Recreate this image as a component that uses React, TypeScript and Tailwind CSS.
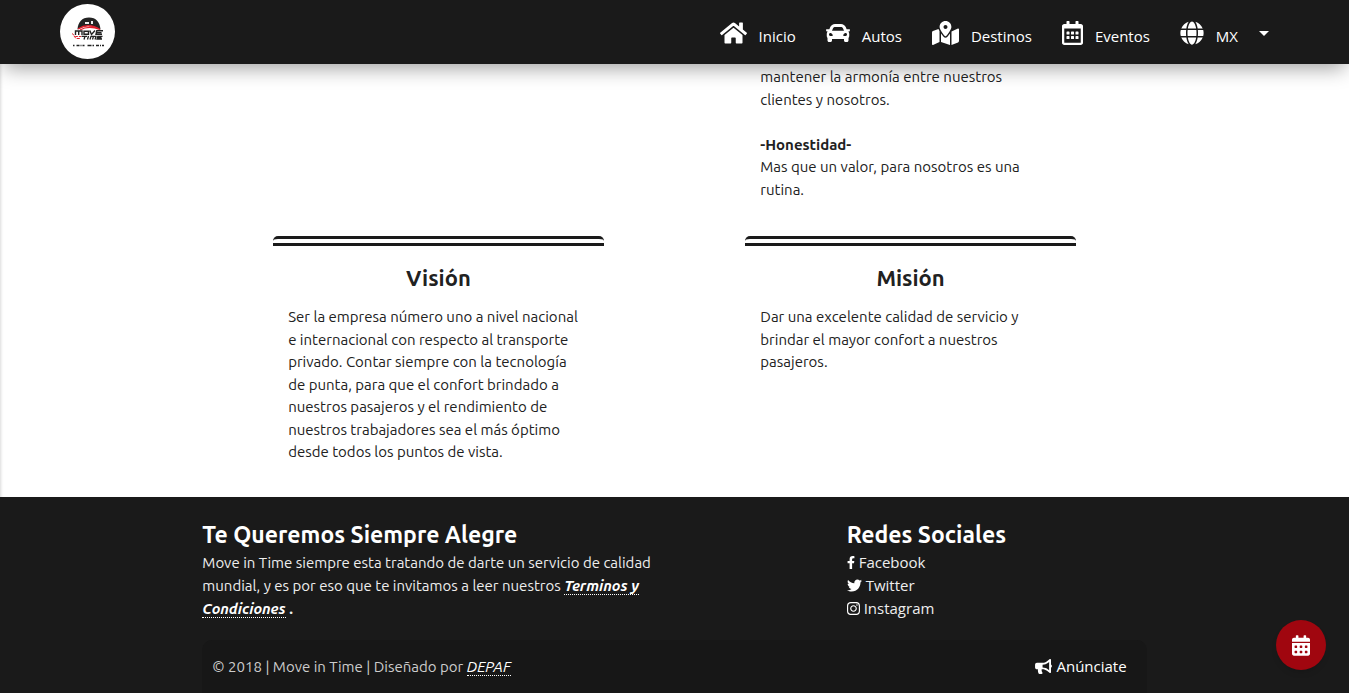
import type { ReactNode } from 'react';
import {
  FaBullhorn,
  FaCalendarAlt,
  FaCar,
  FaFacebookF,
  FaGlobe,
  FaHome,
  FaInstagram,
  FaMapMarkedAlt,
  FaRegCalendarAlt,
  FaTwitter,
} from 'react-icons/fa';

function Logo() {
  return (
    <svg viewBox="0 0 55 55" className="size-[55px]" role="img" aria-label="Move in Time">
      <circle cx="27.5" cy="27.5" r="27.5" fill="#fff" />
      <path d="M17.500 25.500C18 18 22 13.500 29 13.500C36 13.500 40 18 40.500 25.500L36 23.500C31 21 27 21 22 23.500Z" fill="#232323" />
      <path d="M25 18h4v2h-4zM31 17h2v3h-2z" fill="#eee" />
      <path d="M18 25C25 20.500 32 20.500 40 25.500C32 22.500 26 22.500 20 26" fill="none" stroke="#e01f2c" strokeWidth="1.300" />
      <path
        d="M15.500 31V27H22V31M18.700 27V31M24 27.200H28.500V30.300H24ZM29.800 26.500L31.500 30.500L35 26.500M43 26.800H36.800L36 30.300H42M36.500 28.600H41.500"
        fill="none"
        stroke="#222"
        strokeWidth="1.400"
      />
      <path
        d="M21.500 32.300H27M25 32.300L24 35.500M28.500 32L27.500 35.500M30 35.500L31 32.300H36L35 35.500M33.500 32.300L32.500 35.500M42.500 32.300H37.800L37 35H42M37.300 33.700H41.500"
        fill="none"
        stroke="#222"
        strokeWidth="1.300"
      />
      <path d="M12 29.500L15.500 32.500H21M14 32L16 34.500H20" fill="none" stroke="#e01f2c" strokeWidth="1" strokeDasharray="3 1" />
      <path d="M13 41.500H44" stroke="#222" strokeWidth="1.400" strokeDasharray="1.500 2 3 1 1 1 2 3 4 1" />
    </svg>
  );
}

function NavLink({ icon, children }: { icon: ReactNode; children: ReactNode }) {
  return (
    <li>
      <a href="#" className="flex items-center gap-3 px-[15px] text-[15px]">
        {icon}
        <span className="pt-[6px]">{children}</span>
      </a>
    </li>
  );
}

function Card({ title, children }: { title: string; children: ReactNode }) {
  return (
    <section className="mx-[15%] rounded-t-[5px] border-t-[10px] border-double border-[#1a1a1a] px-[15px]">
      <h2 className="pt-[18px] pb-[14px] text-center text-[22px] leading-7 font-semibold">{title}</h2>
      <p className="pr-[5px]">{children}</p>
    </section>
  );
}

function SocialLink({ icon, children }: { icon: ReactNode; children: ReactNode }) {
  return (
    <li>
      <a href="#" className="flex items-center gap-1 text-[#eee]">
        <span className="text-white">{icon}</span>
        {children}
      </a>
    </li>
  );
}

export default function App() {
  return (
    <div className="flex min-h-screen flex-col bg-white font-['Open_Sans','Noto_Sans',sans-serif] text-[15px] leading-normal text-[#212121]">
      <header className="sticky top-0 z-10 flex h-16 items-center justify-between bg-[#1a1a1a] pr-[73px] pl-[60px] text-white shadow-[0_8px_20px_-4px_rgba(0,0,0,0.38)]">
        <a href="#" className="pb-[2px]">
          <Logo />
        </a>
        <nav className="pt-[2px]">
          <ul className="flex items-center">
            <NavLink icon={<FaHome className="h-6 w-[27px]" />}>Inicio</NavLink>
            <NavLink icon={<FaCar className="size-6" />}>Autos</NavLink>
            <NavLink icon={<FaMapMarkedAlt className="h-6 w-[27px]" />}>Destinos</NavLink>
            <NavLink icon={<FaRegCalendarAlt className="h-6 w-[21px]" />}>Eventos</NavLink>
            <li>
              <button type="button" className="flex items-center gap-3 pl-[15px]">
                <FaGlobe className="size-6" />
                <span className="pt-[6px]">MX</span>
                <svg viewBox="0 0 24 24" className="ml-[2px] size-6" fill="currentColor" aria-hidden="true">
                  <path d="M7 10l5 5 5-5z" />
                </svg>
              </button>
            </li>
          </ul>
        </nav>
      </header>

      <main className="flex-1 shadow-[inset_3px_0_3px_-2px_rgba(0,0,0,0.15)]">
        <div className="mx-auto grid w-[70%] grid-cols-2 gap-y-[35px] pt-[2px] pb-[33px] font-['Ubuntu','Open_Sans','Noto_Sans',sans-serif]">
          <div className="col-start-2 mx-[15%] px-[15px]">
            <p>
              mantener la armonía entre nuestros
              <br />
              clientes y nosotros.
            </p>
            <br />
            <p>
              <b>-Honestidad-</b>
              <br />
              Mas que un valor, para nosotros es una
              <br />
              rutina.
            </p>
          </div>
          <Card title="Visión">
            Ser la empresa número uno a nivel nacional e internacional con respecto al transporte privado. Contar
            siempre con la tecnología de punta, para que el confort brindado a nuestros pasajeros y el rendimiento de
            nuestros trabajadores sea el más óptimo desde todos los puntos de vista.
          </Card>
          <Card title="Misión">
            Dar una excelente calidad de servicio y brindar el mayor confort a nuestros pasajeros.
          </Card>
        </div>
      </main>

      <footer className="bg-[#1a1a1a] pt-5 leading-[23px] text-white">
        <div className="mx-auto w-[70%]">
          <div className="flex justify-between">
            <div className="w-1/2 font-['Ubuntu','Open_Sans','Noto_Sans',sans-serif]">
              <h2 className="pt-[3px] pb-px text-[23px] leading-[30px] font-semibold">Te Queremos Siempre Alegre</h2>
              <p className="text-[#eee]">
                Move in Time siempre esta tratando de darte un servicio de calidad mundial, y es por eso que te
                invitamos a leer nuestros{' '}
                <a href="#" className="border-b border-dotted border-white font-bold text-white italic">
                  Terminos y Condiciones
                </a>{' '}
                <b>.</b>
              </p>
            </div>
            <div className="w-[300px]">
              <h2 className="pt-[3px] pb-px font-['Ubuntu','Open_Sans','Noto_Sans',sans-serif] text-[23px] leading-[30px] font-semibold">
                Redes Sociales
              </h2>
              <ul>
                <SocialLink icon={<FaFacebookF className="w-2" />}>Facebook</SocialLink>
                <SocialLink icon={<FaTwitter />}>Twitter</SocialLink>
                <SocialLink icon={<FaInstagram className="w-[13px]" />}>Instagram</SocialLink>
              </ul>
            </div>
          </div>
          <div className="mt-5 flex items-center justify-between rounded-t-[10px] bg-[#171717] pt-[15px] pr-5 pb-[15px] pl-[10px]">
            <p className="font-['Ubuntu','Open_Sans','Noto_Sans',sans-serif] text-[#ccc]">
              © 2018 | Move in Time | Diseñado por{' '}
              <a href="#" className="border-b border-dotted border-white text-white italic">
                DEPAF
              </a>
            </p>
            <a href="#" className="flex items-center gap-1">
              <FaBullhorn className="h-[15px] w-[17px]" />
              Anúnciate
            </a>
          </div>
        </div>
      </footer>

      <button
        type="button"
        aria-label="Reservar"
        className="fixed right-[23px] bottom-[23px] z-20 flex size-[50px] items-center justify-center rounded-full bg-[#a0060f] text-white shadow-md"
      >
        <FaCalendarAlt className="h-[21px] w-[18px]" />
      </button>
    </div>
  );
}
